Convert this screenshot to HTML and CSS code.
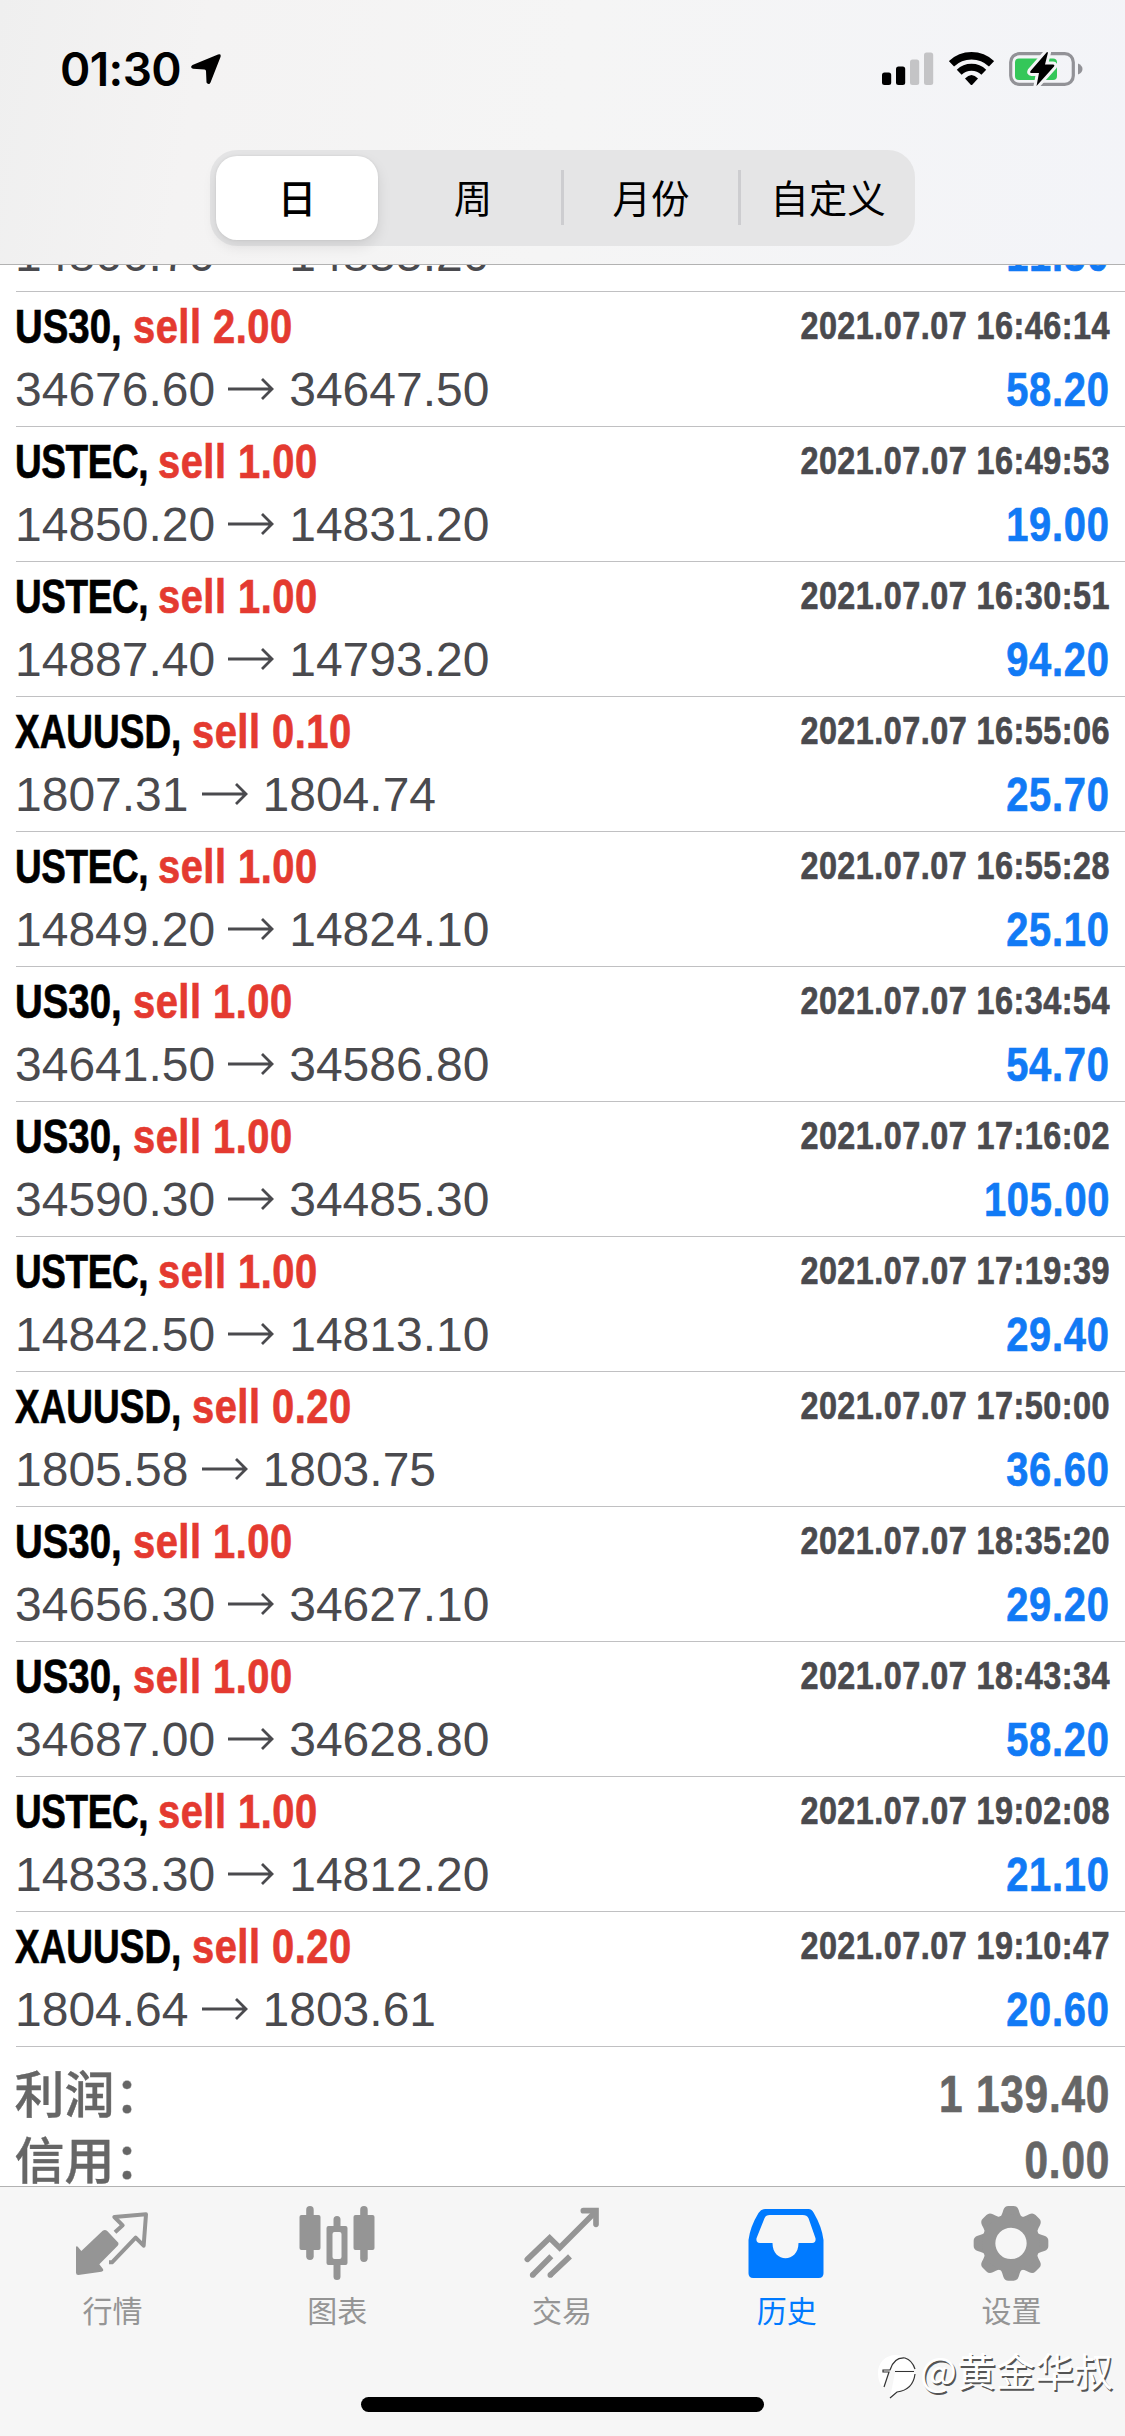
FILE: index.html
```html
<!DOCTYPE html>
<html lang="zh-CN">
<head>
<meta charset="utf-8">
<title>历史</title>
<link rel="stylesheet" href="styles.css">
</head>
<body>
<svg width="0" height="0" class="defs">
  <defs>
    <symbol id="arrow" viewBox="0 0 46 22"><path d="M0 11H44M34 1L44 11L34 21" fill="none" stroke="currentColor" stroke-width="2.8"/></symbol>
    <path id="tooth" d="M-38 -72Q-28 -80 -23 -100Q-19 -112 -8 -112H8Q19 -112 23 -100Q28 -80 38 -72Z"/>
  </defs>
</svg>
<div class="screen">
  <header class="top">
    <div class="status">
      <span class="time">01:30</span>
      <svg class="location" width="30" height="31" viewBox="0 0 30 31"><path d="M27 0.500Q30.500 -0.500 29.500 3L19.500 28.500Q18 31.500 15.500 28.500L15 17Q14.900 15.700 13.500 15.500L2 14.800Q-1.500 13.500 1.500 11Z"/></svg>
      <div class="indicators">
        <svg class="signal" width="52" height="33" viewBox="0 0 52 33"><rect x="0" y="20.500" width="9.200" height="12.500" rx="2.500"/><rect x="14" y="14.500" width="9.200" height="18.500" rx="2.500"/><g fill="#c4c4c6"><rect x="28" y="7.500" width="9.200" height="25.500" rx="2.500"/><rect x="42" y="0.500" width="9.200" height="32.500" rx="2.500"/></g></svg>
        <svg class="wifi" width="45" height="34" viewBox="0 0 45 34"><g fill="none" stroke="#000"><path d="M2.500 11.800A29 29 0 0 1 42.500 11.800" stroke-width="7.400"/><path d="M10.200 20.300A17.800 17.800 0 0 1 34.800 20.300" stroke-width="7"/></g><path d="M16 26.500Q22.500 19.500 29 26.500L23.500 32.500Q22.500 33.500 21.500 32.500Z"/></svg>
        <svg class="battery" width="74" height="36" viewBox="0 -1 74 36"><rect x="1.700" y="1.700" width="62.600" height="30.600" rx="8.500" fill="none" stroke="#929297" stroke-width="3.200"/><path d="M69 11.500Q73.500 13.500 73.500 17T69 22.500Z" fill="#929297"/><rect x="6" y="6.500" width="42" height="21.500" rx="4" fill="#34c759"/><path d="M38 0L21.500 19Q20.500 21 22.500 21H30L27.500 34L45 14.500Q46 12.500 44 12.500H36L39 0.500Z" stroke="#f4f4f6" stroke-width="6" stroke-linejoin="round"/><path d="M38 0L21.500 19Q20.500 21 22.500 21H30L27.500 34L45 14.500Q46 12.500 44 12.500H36L39 0.500Z"/></svg>
      </div>
    </div>
    <nav class="segments">
      <span class="segment selected">日</span>
      <span class="segment">周</span>
      <span class="segment divided">月份</span>
      <span class="segment divided">自定义</span>
    </nav>
  </header>

  <main class="history">
    <ul class="deals">
      <li class="deal"><div class="title"><span class="ustec">USTEC, </span><b>sell 1.00</b></div><div class="date">2021.07.07 16:45:10</div><div class="price">14866.70<svg class="to"><use href="#arrow"/></svg>14855.20</div><div class="profit">11.50</div></li>
      <li class="deal"><div class="title"><span class="us30">US30, </span><b>sell 2.00</b></div><div class="date">2021.07.07 16:46:14</div><div class="price">34676.60<svg class="to"><use href="#arrow"/></svg>34647.50</div><div class="profit">58.20</div></li>
      <li class="deal"><div class="title"><span class="ustec">USTEC, </span><b>sell 1.00</b></div><div class="date">2021.07.07 16:49:53</div><div class="price">14850.20<svg class="to"><use href="#arrow"/></svg>14831.20</div><div class="profit">19.00</div></li>
      <li class="deal"><div class="title"><span class="ustec">USTEC, </span><b>sell 1.00</b></div><div class="date">2021.07.07 16:30:51</div><div class="price">14887.40<svg class="to"><use href="#arrow"/></svg>14793.20</div><div class="profit">94.20</div></li>
      <li class="deal"><div class="title"><span class="xauusd">XAUUSD, </span><b>sell 0.10</b></div><div class="date">2021.07.07 16:55:06</div><div class="price">1807.31<svg class="to"><use href="#arrow"/></svg>1804.74</div><div class="profit">25.70</div></li>
      <li class="deal"><div class="title"><span class="ustec">USTEC, </span><b>sell 1.00</b></div><div class="date">2021.07.07 16:55:28</div><div class="price">14849.20<svg class="to"><use href="#arrow"/></svg>14824.10</div><div class="profit">25.10</div></li>
      <li class="deal"><div class="title"><span class="us30">US30, </span><b>sell 1.00</b></div><div class="date">2021.07.07 16:34:54</div><div class="price">34641.50<svg class="to"><use href="#arrow"/></svg>34586.80</div><div class="profit">54.70</div></li>
      <li class="deal"><div class="title"><span class="us30">US30, </span><b>sell 1.00</b></div><div class="date">2021.07.07 17:16:02</div><div class="price">34590.30<svg class="to"><use href="#arrow"/></svg>34485.30</div><div class="profit">105.00</div></li>
      <li class="deal"><div class="title"><span class="ustec">USTEC, </span><b>sell 1.00</b></div><div class="date">2021.07.07 17:19:39</div><div class="price">14842.50<svg class="to"><use href="#arrow"/></svg>14813.10</div><div class="profit">29.40</div></li>
      <li class="deal"><div class="title"><span class="xauusd">XAUUSD, </span><b>sell 0.20</b></div><div class="date">2021.07.07 17:50:00</div><div class="price">1805.58<svg class="to"><use href="#arrow"/></svg>1803.75</div><div class="profit">36.60</div></li>
      <li class="deal"><div class="title"><span class="us30">US30, </span><b>sell 1.00</b></div><div class="date">2021.07.07 18:35:20</div><div class="price">34656.30<svg class="to"><use href="#arrow"/></svg>34627.10</div><div class="profit">29.20</div></li>
      <li class="deal"><div class="title"><span class="us30">US30, </span><b>sell 1.00</b></div><div class="date">2021.07.07 18:43:34</div><div class="price">34687.00<svg class="to"><use href="#arrow"/></svg>34628.80</div><div class="profit">58.20</div></li>
      <li class="deal"><div class="title"><span class="ustec">USTEC, </span><b>sell 1.00</b></div><div class="date">2021.07.07 19:02:08</div><div class="price">14833.30<svg class="to"><use href="#arrow"/></svg>14812.20</div><div class="profit">21.10</div></li>
      <li class="deal"><div class="title"><span class="xauusd">XAUUSD, </span><b>sell 0.20</b></div><div class="date">2021.07.07 19:10:47</div><div class="price">1804.64<svg class="to"><use href="#arrow"/></svg>1803.61</div><div class="profit">20.60</div></li>
    </ul>
    <div class="totals">
      <div class="total"><span class="label">利润：</span><span class="amount">1 139.40</span></div>
      <div class="total"><span class="label">信用：</span><span class="amount">0.00</span></div>
    </div>
  </main>

  <footer class="bottom">
    <nav class="tabs">
      <div class="tab"><svg viewBox="36 27 234 234"><path d="M45 155Q48 152 51 156L61 168L125 107Q132 103 138 107L172 143Q174 148 170 152L115 208L126 222Q129 228 121 230L52 240Q45 240 45 233Z"/><path d="M162 112L185 91L160 66L255 58L248 152L224 128L153 202L144 202" fill="none" stroke="currentColor" stroke-width="12" stroke-linejoin="round"/></svg><span>行情</span></div>
      <div class="tab"><svg viewBox="-1.500 -2 78 78"><rect y="9" width="21" height="35" rx="2"/><rect x="6.700" width="7.500" height="54" rx="3.700"/><rect x="54" y="9" width="21" height="35" rx="2"/><rect x="60.700" width="7.500" height="56" rx="3.700"/><path d="M29 20H34V13.500Q34 10 37.500 10T41 13.500V20H46Q48 20 48 22V57Q48 59 46 59H41V70.500Q41 74 37.500 74T34 70.500V59H29Q27 59 27 57V22Q27 20 29 20ZM35 26Q33 26 33 28V51Q33 53 35 53H40Q42 53 42 51V28Q42 26 40 26Z" fill-rule="evenodd"/></svg><span>图表</span></div>
      <div class="tab"><svg viewBox="51 27 234 234"><g fill="none" stroke="currentColor" stroke-width="17"><path d="M67 193L134 129L164 158L268 54" stroke-linecap="round"/><path d="M235 47H273V88" stroke-linecap="round"/><path d="M83 240L139 184M136 240L195 184"/></g><circle cx="83" cy="240" r="8.500"/><circle cx="136" cy="240" r="8.500"/></svg><span>交易</span></div>
      <div class="tab active"><svg viewBox="37.500 27 234 234"><path fill-rule="evenodd" d="M92 42H222Q232 42 238 54Q262 95 267 135V235Q267 249 253 249H56Q42 249 42 235V135Q47 95 72 54Q80 42 92 42ZM106 60Q94 60 90 70L66 130Q64 144 76 144H114C114 205 192 205 192 144H233Q245 144 243 130L222 70Q217 60 205 60Z"/></svg><span>历史</span></div>
      <div class="tab"><svg viewBox="713 27 234 234"><g transform="translate(830 145)"><use href="#tooth"/><use href="#tooth" transform="rotate(45)"/><use href="#tooth" transform="rotate(90)"/><use href="#tooth" transform="rotate(135)"/><use href="#tooth" transform="rotate(180)"/><use href="#tooth" transform="rotate(225)"/><use href="#tooth" transform="rotate(270)"/><use href="#tooth" transform="rotate(315)"/><circle r="67" fill="none" stroke="currentColor" stroke-width="40"/></g></svg><span>设置</span></div>
    </nav>
    <div class="home"></div>
    <div class="watermark">
      <svg width="40" height="46" viewBox="0 0 40 46"><path d="M19 1C8 1 1 9 1 19C1 27 4 32 7 34L12 18H6V15H13Q17 3 27 3Q23 1 19 1Z" fill="#fff"/><path d="M14 16Q18 4 27 4Q34 6 37 16ZM18 18.500H38Q35 35 20 37L13 44Z" fill="#fff"/><path d="M7 33L12 18H6V16H13Q17 3 28 4Q35 6 38 15M18 17.500H37M38 20Q36 36 20 38L13 44" fill="none" stroke="#333" stroke-width="1.200"/></svg>
      <span>@黄金华叔</span>
    </div>
  </footer>
</div>
</body>
</html>
```
FILE: styles.css
```css
* { box-sizing: border-box; }
body {
  margin: 0;
  background: #fff;
  font-family: "Liberation Sans", "Noto Sans CJK SC", sans-serif;
  font-kerning: none;
}
.defs { display: block; }
.screen {
  width: 1125px;
  height: 2436px;
  display: flex;
  flex-direction: column;
  overflow: hidden;
}
svg { flex: none; }

.top {
  height: 265px;
  flex: none;
  border-bottom: 1px solid #b2b2b2;
  background: linear-gradient(100deg, #efefef 0%, #f4f3f3 18%, #f5f5f5 50%, #f3f4f8 100%);
}
.status {
  height: 150px;
  display: flex;
  align-items: flex-start;
  padding: 0 42px 0 60px;
}
.time {
  font: 600 46px/56px Inter, sans-serif;
  letter-spacing: -0.6px;
  width: 131px;
  padding-top: 41px;
  white-space: nowrap;
}
.location { margin-top: 54px; }
.indicators {
  margin-left: auto;
  display: flex;
  padding-top: 52px;
}
.wifi { margin-left: 15px; }
.battery { margin: -1px 0 0 15px; }

.segments {
  width: 705px;
  height: 96px;
  margin-left: 210px;
  padding: 5.5px 0 6px 6px;
  border-radius: 27px;
  background: #e5e5e6;
  display: grid;
  grid-template-columns: 162px 183px 177px 177px;
}
.segment {
  display: flex;
  align-items: center;
  justify-content: center;
  font: 400 38.5px/60px "Noto Sans CJK SC", sans-serif;
  border-left: 3px solid transparent;
  padding: 0 0 4px 4px;
}
.segment.selected {
  background: #fff;
  border: 0;
  border-radius: 21px;
  padding-left: 0;
  font-weight: 500;
  box-shadow: 0 6px 14px rgba(0, 0, 0, 0.1), 0 0 3px rgba(0, 0, 0, 0.08);
}
.segment.divided {
  padding-left: 0;
  background: linear-gradient(#cdcdd0, #cdcdd0) left center / 3px 55px no-repeat;
  background-origin: border-box;
}

.history {
  height: 1921px;
  flex: none;
  overflow: hidden;
}
.deals {
  list-style: none;
  margin: -109px 0 0;
  padding: 0 0 0 16px;
}
.deal {
  height: 135px;
  border-top: 1px solid #c0c0c2;
  padding: 3px 15px 0 0;
  display: grid;
  grid-template-columns: 1fr 1fr;
  grid-template-rows: 63px 63px;
  white-space: pre;
  font-size: 48px;
  line-height: 63px;
  color: #4a4a4e;
}
.title, .date, .profit, .amount { font-weight: 700; -webkit-text-stroke: 0.7px; }
.title { display: flex; margin-left: -1px; color: #000; }
.title span, .title b { flex: none; transform-origin: left; }
.title b { color: #e43a30; letter-spacing: 0.6px; transform: scaleX(0.83); }
.us30 { width: 117.5px; transform: scaleX(0.8); }
.ustec { width: 142.5px; letter-spacing: -0.5px; transform: scaleX(0.77); }
.xauusd { width: 177px; transform: scaleX(0.77); }
.date, .profit, .amount { justify-self: end; transform: scaleX(0.83); transform-origin: right; }
.date { font-size: 39px; line-height: 61px; letter-spacing: 0.57px; }
.profit { color: #117af5; letter-spacing: 0.9px; }
.price { display: flex; align-items: center; margin-left: -1px; }
.to { width: 46px; height: 22px; margin: -2px 15px 0 13px; }

.totals {
  margin-left: 16px;
  padding: 15px 15px 0 0;
  border-top: 1px solid #c0c0c2;
}
.total {
  height: 66px;
  display: flex;
  justify-content: space-between;
  font-size: 51px;
  line-height: 66px;
  color: #666;
}
.label {
  margin-left: -1.5px;
  font-family: "Noto Sans CJK SC", sans-serif;
  font-size: 50px;
  line-height: 59px;
  font-weight: 500;
  -webkit-text-stroke: 0.4px;
}
.amount { letter-spacing: 0.95px; }

.bottom {
  flex: 1;
  border-top: 1px solid #b2b2b2;
  background: #f6f6f6;
  position: relative;
}
.tabs {
  display: grid;
  grid-template-columns: repeat(5, 1fr);
  padding: 17px 1px 0 0;
}
.tab {
  display: flex;
  flex-direction: column;
  align-items: center;
  gap: 7px;
  color: #959595;
  fill: currentColor;
  font: 400 30px/40px "Noto Sans CJK SC", sans-serif;
}
.tab svg { width: 78px; height: 78px; margin-left: -1px; }
.tab.active { color: #007aff; }
.home {
  width: 403px;
  height: 15px;
  margin: 68px 0 0 361px;
  border-radius: 8px;
  background: #000;
}
.watermark {
  position: absolute;
  left: 877px;
  top: 167px;
  display: flex;
  align-items: flex-start;
  gap: 3px;
  font: 400 39px/30px "Noto Sans CJK SC", sans-serif;
  color: #fff;
  white-space: nowrap;
  text-shadow: 1.5px 1.5px 0.5px #555;
}
```
